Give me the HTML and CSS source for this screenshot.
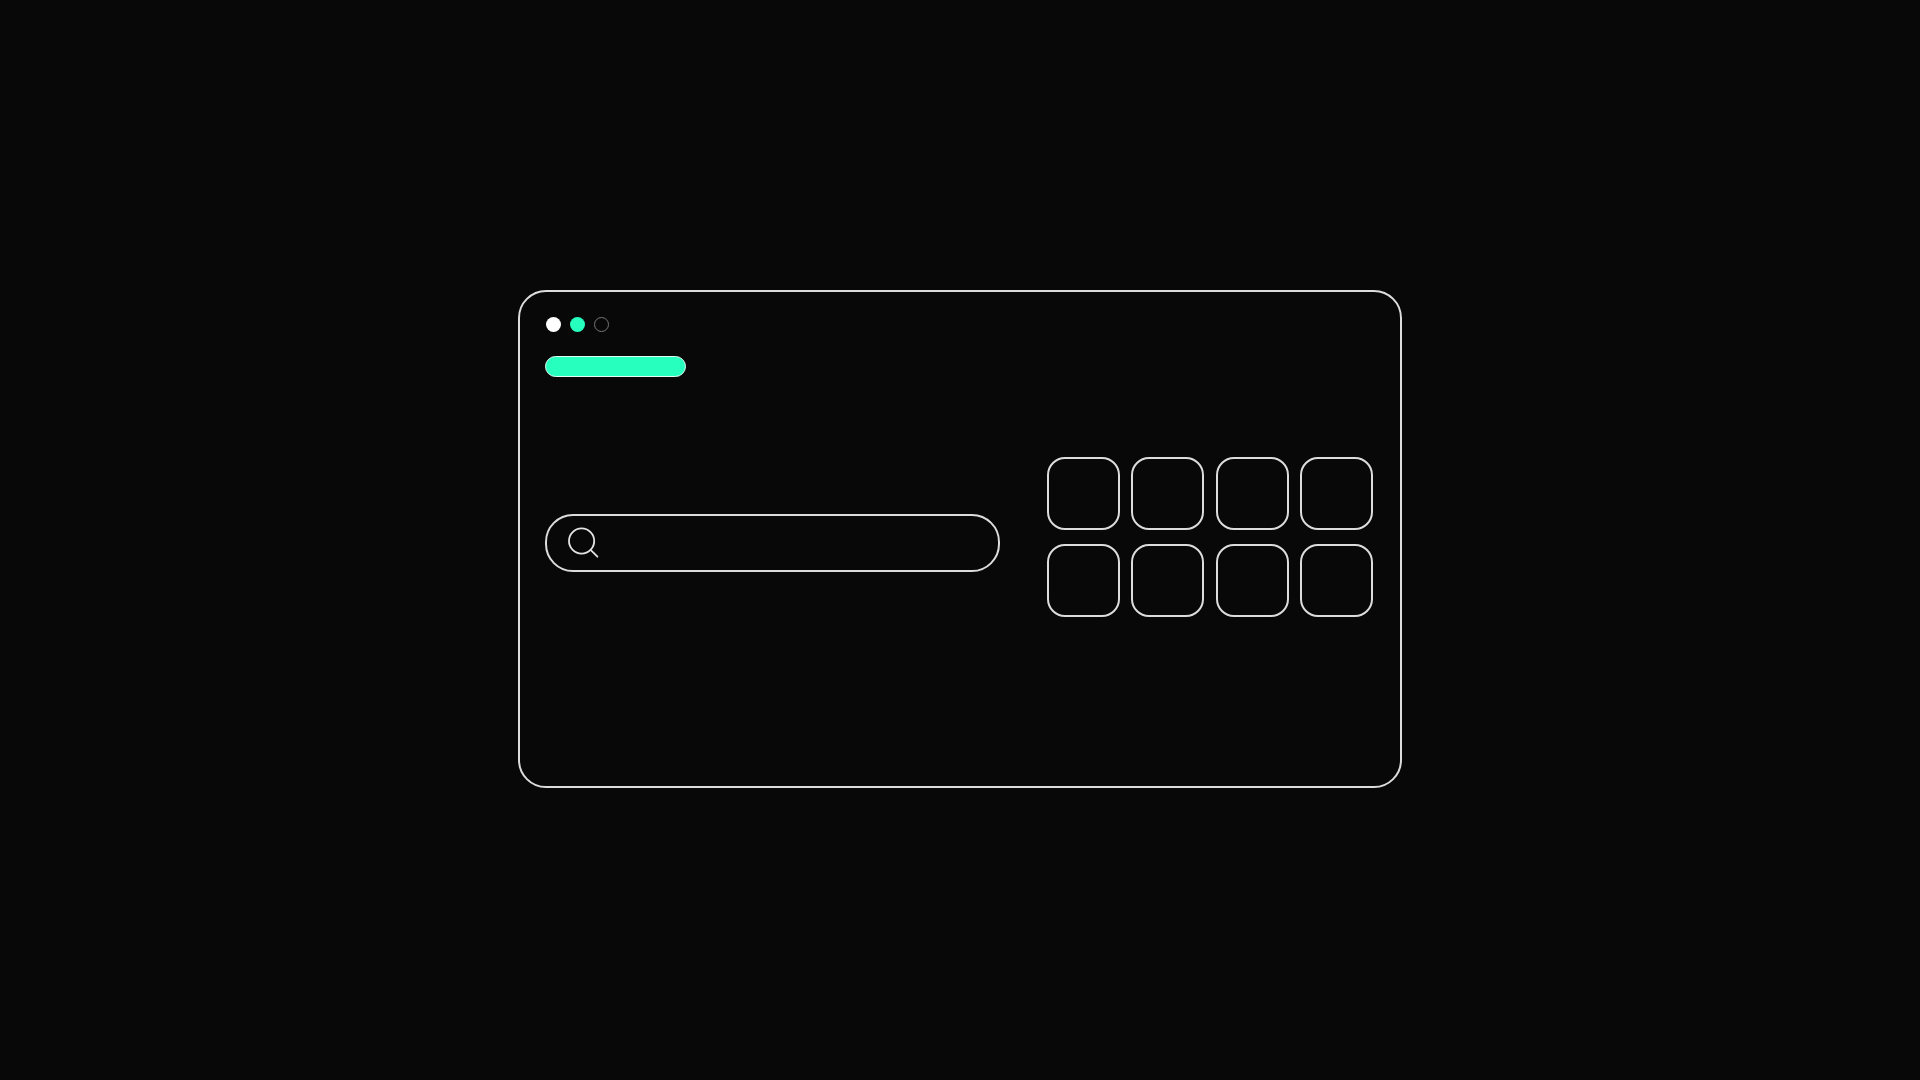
FILE: index.html
```html
<!DOCTYPE html>
<html lang="en">

<head>
    <meta charset="UTF-8">
    <meta name="viewport" content="width=device-width, initial-scale=1">
    <title>Search</title>
    <link rel="stylesheet" href="styles.css">
</head>

<body>
    <div class="window">
        <header>
            <div class="dots">
                <span class="dot white"></span>
                <span class="dot green"></span>
                <span class="dot empty"></span>
            </div>
            <div class="tab"></div>
        </header>
        <main>
            <form class="search" role="search">
                <label for="query" aria-label="Search">
                    <svg class="icon" width="32" height="32" viewBox="0 0 32 32" fill="none" stroke="currentColor" stroke-width="1.8" stroke-linecap="round">
                        <circle cx="14.6" cy="14" r="12.6"></circle>
                        <line x1="23.6" y1="22.9" x2="30.4" y2="29.7"></line>
                    </svg>
                </label>
                <input id="query" type="text">
            </form>
            <div class="tiles">
                <button class="tile" type="button" aria-label="Shortcut 1"></button>
                <button class="tile" type="button" aria-label="Shortcut 2"></button>
                <button class="tile" type="button" aria-label="Shortcut 3"></button>
                <button class="tile" type="button" aria-label="Shortcut 4"></button>
                <button class="tile" type="button" aria-label="Shortcut 5"></button>
                <button class="tile" type="button" aria-label="Shortcut 6"></button>
                <button class="tile" type="button" aria-label="Shortcut 7"></button>
                <button class="tile" type="button" aria-label="Shortcut 8"></button>
            </div>
        </main>
    </div>
</body>

</html>
```

FILE: styles.css
```css
* {
    box-sizing: border-box;
}

body {
    margin: 0;
    min-height: 100vh;
    padding-bottom: 2px;
    display: flex;
    align-items: center;
    justify-content: center;
    background-color: #080808;
    color: #e4e4e4;
    font-family: "Liberation Sans", sans-serif;
}

.window {
    width: 100%;
    max-width: 884px;
    min-height: 498px;
    padding: 24px 27px 24px 25px;
    border: 2px solid #dcdcdc;
    border-radius: 28px;
}

.dots {
    display: flex;
    gap: 9px;
    padding: 1px 0 0 1px;
}

.dot {
    width: 15px;
    height: 15px;
    border-radius: 50%;
}

.white {
    background-color: #fff;
}

.green {
    background-color: #27ffbf;
}

.empty {
    border: 1px solid #777;
}

.tab {
    width: 141px;
    height: 21px;
    margin-top: 24px;
    border: 1px solid #dffff5;
    border-radius: 11px;
    background-color: #27ffbf;
}

main {
    display: flex;
    align-items: center;
    gap: 47px;
    margin-top: 80px;
}

.search {
    flex: 1;
    display: flex;
    align-items: center;
    height: 58px;
    margin-top: 12px;
    padding: 0 20px;
    border: 2px solid #dcdcdc;
    border-radius: 28px;
}

.icon {
    display: block;
}

#query {
    flex: 1;
    min-width: 0;
    padding: 0 12px;
    border: 0;
    outline: none;
    background: none;
    color: inherit;
    font-size: 16px;
}

.tiles {
    display: grid;
    grid-template-columns: repeat(4, 73px);
    justify-content: space-between;
    row-gap: 14px;
    width: 326px;
}

.tile {
    height: 73px;
    padding: 0;
    border: 2px solid #dcdcdc;
    border-radius: 18px;
    background: none;
    cursor: pointer;
}
```
